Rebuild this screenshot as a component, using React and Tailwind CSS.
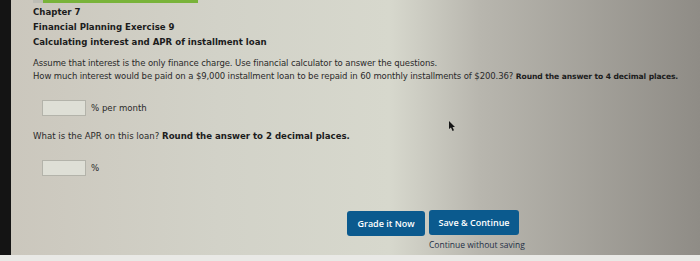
import React from 'react';

const sans = { fontFamily: '"DejaVu Sans", Verdana, sans-serif' };
const open = { fontFamily: '"Open Sans", "Liberation Sans", sans-serif' };

function AnswerBox({ label }) {
  return (
    <div className="flex items-center ml-[9px]">
      <div className="w-[44px] h-[16px] bg-[#dedfd6] border border-[#b3b3aa]" />
      <span className="ml-[5px] text-[8.6px] text-[#2a2a2a]">{label}</span>
    </div>
  );
}

export default function App() {
  return (
    <div className="w-[700px] h-[261px] flex flex-col overflow-hidden bg-black" style={sans}>
      <div className="flex flex-1 min-h-0">
        <div className="w-[11px] bg-[#141414]" />
        <div className="flex-1 relative pl-[22px] bg-[linear-gradient(90deg,#cbc7bd_0%,#d2d2c8_30%,#d7d8cd_55%,#b8b6ae_68%,#8f8c86_100%)]">
          <div className="flex h-[3px]">
            <div className="w-[10px] bg-[#bdbdb5]" />
            <div className="w-[155px] bg-[#79b33a]" />
          </div>

          <div className="pt-[2px] text-[8.6px] font-bold leading-[15px] text-[#1c1c1c]">
            <p>Chapter 7</p>
            <p>Financial Planning Exercise 9</p>
            <p>Calculating interest and APR of installment loan</p>
          </div>

          <div className="mt-[7px] text-[8.5px] leading-[13px] text-[#2a2a2a] tracking-[-0.1px]">
            <p>Assume that interest is the only finance charge. Use financial calculator to answer the questions.</p>
            <p className="whitespace-nowrap">
              How much interest would be paid on a $9,000 installment loan to be repaid in 60 monthly installments of $200.36?{' '}
              <span className="font-bold text-[7.6px] text-[#1c1c1c]">Round the answer to 4 decimal places.</span>
            </p>
          </div>

          <div className="mt-[17px]">
            <AnswerBox label="% per month" />
          </div>

          <p className="mt-[14px] text-[8.6px] leading-[13px] text-[#2a2a2a]">
            What is the APR on this loan? <span className="font-bold text-[#1c1c1c]">Round the answer to 2 decimal places.</span>
          </p>

          <div className="mt-[17px]">
            <AnswerBox label="%" />
          </div>

          <div className="mt-[34px] ml-[314px] flex gap-[4px]" style={open}>
            <button className="mt-[1px] w-[78px] h-[25px] rounded-[3px] bg-[#0b5a8e] text-white text-[9px] font-semibold">
              Grade it Now
            </button>
            <div className="flex flex-col">
              <button className="w-[90px] h-[25px] rounded-[3px] bg-[#0b5a8e] text-white text-[9px] font-semibold">
                Save &amp; Continue
              </button>
              <span className="mt-[4px] text-[8.5px] text-[#1f2f45]">Continue without saving</span>
            </div>
          </div>

          <svg className="absolute left-[438px] top-[121px]" width="8" height="11" viewBox="0 0 8 11">
            <path d="M0 0 L0 8 L2 6.5 L3.5 10 L5 9.3 L3.5 6 L6 6 Z" fill="#151515" />
          </svg>
        </div>
      </div>
      <div className="h-[6px] bg-[#e9e9e6]" />
    </div>
  );
}
